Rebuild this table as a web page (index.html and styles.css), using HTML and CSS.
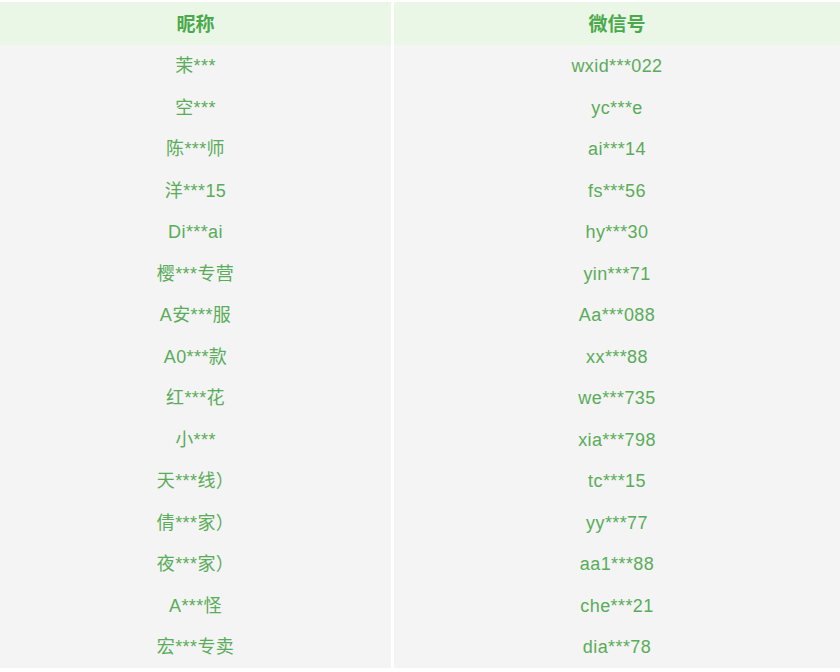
FILE: index.html
```html
<!DOCTYPE html>
<html lang="zh">
<head>
<meta charset="utf-8">
<link rel="stylesheet" href="styles.css">
</head>
<body>
<div class="table">
  <div class="col col-left">
    <div class="th">昵称</div>
    <div class="td">茉***</div>
    <div class="td">空***</div>
    <div class="td">陈***师</div>
    <div class="td">洋***15</div>
    <div class="td">Di***ai</div>
    <div class="td">樱***专营</div>
    <div class="td">A安***服</div>
    <div class="td">A0***款</div>
    <div class="td">红***花</div>
    <div class="td">小***</div>
    <div class="td">天***线）</div>
    <div class="td">倩***家）</div>
    <div class="td">夜***家）</div>
    <div class="td">A***怪</div>
    <div class="td">宏***专卖</div>
  </div>
  <div class="col col-right">
    <div class="th">微信号</div>
    <div class="td">wxid***022</div>
    <div class="td">yc***e</div>
    <div class="td">ai***14</div>
    <div class="td">fs***56</div>
    <div class="td">hy***30</div>
    <div class="td">yin***71</div>
    <div class="td">Aa***088</div>
    <div class="td">xx***88</div>
    <div class="td">we***735</div>
    <div class="td">xia***798</div>
    <div class="td">tc***15</div>
    <div class="td">yy***77</div>
    <div class="td">aa1***88</div>
    <div class="td">che***21</div>
    <div class="td">dia***78</div>
  </div>
</div>
</body>
</html>
```
FILE: styles.css
```css
html, body {
  margin: 0;
  padding: 0;
  background: #ffffff;
}
body {
  width: 840px;
  height: 672px;
  overflow: hidden;
  font-family: "Liberation Sans", Arial, "Noto Sans CJK SC", sans-serif;
}
.table {
  display: grid;
  grid-template-columns: 391px 1fr;
  column-gap: 3px;
  padding-top: 2px;
}
.col {
  display: flex;
  flex-direction: column;
}
.th {
  height: 43px;
  line-height: 45px;
  background: #eaf6e6;
  color: #4aa94a;
  font-weight: bold;
  font-size: 19px;
  text-align: center;
  overflow: hidden;
}
.td {
  height: 41.5px;
  line-height: 43.5px;
  background: #f4f4f4;
  color: #5aac5a;
  font-size: 18px;
  letter-spacing: 0.4px;
  text-align: center;
  overflow: hidden;
}
```
